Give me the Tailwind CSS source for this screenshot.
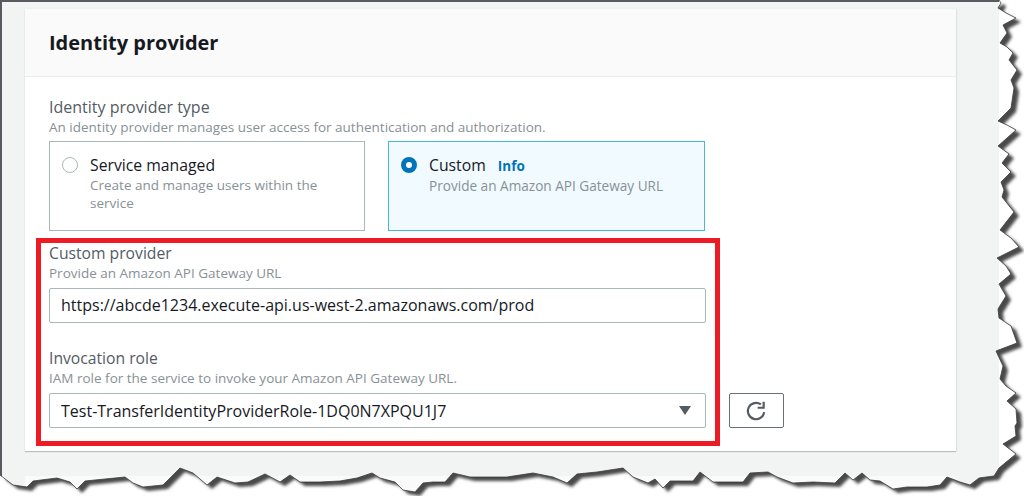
<!DOCTYPE html>
<html lang="en">
<head>
    <meta charset="UTF-8">
    <title>Identity provider</title>
    <script src="https://cdn.jsdelivr.net/npm/@tailwindcss/browser@4"></script>
</head>
<body class="bg-white">
    <div class="relative w-[1024px] h-[496px] overflow-hidden font-['Open_Sans','Noto_Sans',sans-serif]">
        <!-- page -->
        <div class="w-[999px] h-[496px] bg-[#f2f3f3] border-l-2 border-t-2 border-[#555b5f] pl-[23px] pt-[7px]">
            <!-- card -->
            <div class="w-[931px] h-[442px] bg-white shadow-[0_1px_1px_0_#b5c0c2,1px_0_1px_0_#e4e8e8]">
                <div class="h-[68px] bg-[#fafafa] border-b border-[#eaeded] pl-[24px] pt-[18px]">
                    <h2 class="text-[20px] leading-[32px] font-bold text-[#16191f]">Identity provider</h2>
                </div>
                <div class="pl-[24px] pt-[20px]">
                    <div class="text-[16px] leading-[20px] text-[#545b64]">Identity provider type</div>
                    <div class="text-[13.5px] leading-[20px] text-[#879196]">An identity provider manages user access for authentication and authorization.</div>
                    <div class="flex gap-[23px] mt-[4px]">
                        <div class="w-[316px] h-[90px] border border-[#aab7b8] flex pl-[12px] pt-[14px]">
                            <div class="w-[16px] h-[16px] mt-[1px] rounded-full border border-[#aab7b8] bg-white"></div>
                            <div class="ml-[12px] -mt-[1px]">
                                <div class="text-[15.75px] leading-[20px] font-medium text-[#16191f]">Service managed</div>
                                <div class="w-[250px] text-[13.5px] leading-[18px] mt-[1px] text-[#879196]">Create and manage users within the service</div>
                            </div>
                        </div>
                        <div class="w-[317px] h-[90px] border border-[#44b9d6] bg-[#f1faff] flex pl-[12px] pt-[14px]">
                            <div class="w-[16px] h-[16px] mt-[1px] rounded-full border-[5px] border-[#0073bb] bg-white"></div>
                            <div class="ml-[12px] -mt-[1px]">
                                <div class="text-[15.75px] leading-[20px] font-medium text-[#16191f]">Custom <span class="ml-[8px] text-[13.5px] font-bold text-[#0073bb]">Info</span></div>
                                <div class="text-[13.6px] leading-[18px] mt-[1px] text-[#879196]">Provide an Amazon API Gateway URL</div>
                            </div>
                        </div>
                    </div>
                    <div class="flex items-end mt-[7px] -ml-[13px]">
                        <!-- highlighted fields -->
                        <div class="w-[684px] h-[208px] border-[5px] border-[#ed1c24] pl-[8px]">
                            <div class="text-[15.7px] leading-[20px] text-[#545b64]">Custom provider</div>
                            <div class="text-[13.5px] leading-[20px] text-[#879196]">Provide an Amazon API Gateway URL</div>
                            <div class="w-[657px] h-[35px] mt-[5px] border border-[#aab7b8] rounded-[2px] pl-[11px] text-[16px] leading-[33px] text-[#16191f]">https://abcde1234.execute-api.us-west-2.amazonaws.com/prod</div>
                            <div class="text-[15.7px] leading-[20px] mt-[25px] text-[#545b64]">Invocation role</div>
                            <div class="text-[13.5px] leading-[20px] text-[#879196]">IAM role for the service to invoke your Amazon API Gateway URL.</div>
                            <div class="w-[657px] h-[35px] mt-[5px] border border-[#aab7b8] rounded-[2px] pl-[11px] pr-[14px] flex items-center justify-between text-[16px] text-[#16191f]">
                                <span>Test-TransferIdentityProviderRole-1DQ0N7XPQU1J7</span>
                                <svg class="w-[12px] h-[9px]" viewBox="0 0 12 9"><polygon points="0,0 12,0 6,9" fill="#545b64"/></svg>
                            </div>
                        </div>
                        <button class="w-[55px] h-[35px] ml-[9px] mb-[18px] border border-[#687078] rounded-[2px] flex items-center justify-center">
                            <svg class="w-[24px] h-[24px] -ml-[2px]" viewBox="0 0 22 22" fill="none">
                                <path d="M18.5 12 A7.5 7.5 0 1 1 15.5 5" stroke="#545b64" stroke-width="2"/>
                                <path d="M18 2.5 V8 H12.5" stroke="#545b64" stroke-width="2"/>
                            </svg>
                        </button>
                    </div>
                </div>
            </div>
            <!-- next card, cut off by the torn edge -->
            <div class="w-[931px] h-[30px] mt-[25px] bg-[#fafafa]"></div>
        </div>

        <!-- torn paper edge -->
        <svg class="absolute top-0 left-0 w-[1024px] h-[496px]" viewBox="0 0 1024 496">
            <defs>
                <path id="tear" d="M999 0 L1001 3 998 8 1006 13 1016 18 1003 25 1007 33 1000 43 1007 47 1013 53 1009 60 1017 70 1011 80 1014 88 1011 108 998 121 1007 125 1016 130 998 146 1009 154 1002 163 1011 172 1001 182 1004 190 1002 197 1014 212 1000 230 1011 238 1019 247 997 258 1006 266 1011 274 999 284 1006 296 998 309 999 318 1011 326 1017 343 996 351 1003 366 1000 379 1006 386 1016 393 1007 401 1016 409 1017 423 1015 426 1016 436 1003 444 1016 454 999 468 994 476 979 478 970 485 960 482 947 477 940 485 927 487 907 487 893 489 880 481 870 480 862 473 853 480 845 473 835 483 813 482 793 483 777 477 768 472 750 473 743 482 713 482 700 472 693 481 680 481 670 481 663 488 655 479 648 483 633 477 623 468 597 472 577 474 567 483 553 477 533 473 507 477 470 477 453 473 445 482 433 482 423 483 415 492 403 490 395 482 380 478 372 473 357 478 340 481 320 482 300 482 290 475 280 482 265 474 248 482 235 483 217 477 207 485 193 473 180 468 163 485 143 487 133 483 125 477 85 481 77 489 70 482 57 478 33 481 27 487 13 485 0 475"/>
                <clipPath id="outside">
                    <path d="M999 0 L1001 3 998 8 1006 13 1016 18 1003 25 1007 33 1000 43 1007 47 1013 53 1009 60 1017 70 1011 80 1014 88 1011 108 998 121 1007 125 1016 130 998 146 1009 154 1002 163 1011 172 1001 182 1004 190 1002 197 1014 212 1000 230 1011 238 1019 247 997 258 1006 266 1011 274 999 284 1006 296 998 309 999 318 1011 326 1017 343 996 351 1003 366 1000 379 1006 386 1016 393 1007 401 1016 409 1017 423 1015 426 1016 436 1003 444 1016 454 999 468 994 476 979 478 970 485 960 482 947 477 940 485 927 487 907 487 893 489 880 481 870 480 862 473 853 480 845 473 835 483 813 482 793 483 777 477 768 472 750 473 743 482 713 482 700 472 693 481 680 481 670 481 663 488 655 479 648 483 633 477 623 468 597 472 577 474 567 483 553 477 533 473 507 477 470 477 453 473 445 482 433 482 423 483 415 492 403 490 395 482 380 478 372 473 357 478 340 481 320 482 300 482 290 475 280 482 265 474 248 482 235 483 217 477 207 485 193 473 180 468 163 485 143 487 133 483 125 477 85 481 77 489 70 482 57 478 33 481 27 487 13 485 0 475 L0 496 1024 496 1024 0 Z"/>
                </clipPath>
                <filter id="soft" x="-5%" y="-5%" width="110%" height="110%">
                    <feGaussianBlur stdDeviation="1.4"/>
                </filter>
            </defs>
            <rect width="1024" height="496" fill="#fff" clip-path="url(#outside)"/>
            <g clip-path="url(#outside)">
                <use href="#tear" transform="translate(5 4)" fill="#4a4a4a" filter="url(#soft)"/>
            </g>
            <use href="#tear" fill="none" stroke="#3c3c3c" stroke-width="0.8"/>
        </svg>
    </div>
</body>
</html>
